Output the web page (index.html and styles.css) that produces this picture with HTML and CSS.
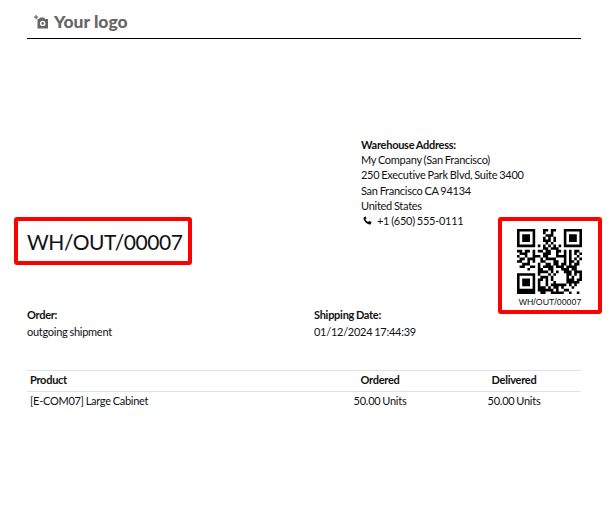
FILE: index.html
```html
<!DOCTYPE html>
<html lang="en">
<head>
<meta charset="utf-8">
<title>WH/OUT/00007</title>
<link rel="stylesheet" href="styles.css">
</head>
<body>
<div class="page">
  <header class="header">
    <svg class="logo-icon" width="14" height="14" viewBox="0 0 14 14"><path fill="#666" fill-rule="evenodd" d="M0 1.500h1.500V0h1.200v1.500h1.500v1.200H2.700v1.500H1.500V2.700H0zM3.500 4H5l1-1.500h4L11 4h3v9.500H3.500zM8.700 5.700a2.700 2.700 0 1 0 0 5.400 2.700 2.700 0 0 0 0-5.400zm0 1.400a1.300 1.300 0 1 1 0 2.600 1.300 1.300 0 0 1 0-2.600z"/></svg>
    <span class="logo-text">Your logo</span>
  </header>

  <section class="address">
    <div class="strong">Warehouse Address:</div>
    <div>My Company (San Francisco)</div>
    <div>250 Executive Park Blvd, Suite 3400</div>
    <div>San Francisco CA 94134</div>
    <div>United States</div>
    <div class="phone">
      <svg width="9" height="9" viewBox="0 0 24 24"><path fill="#111" d="M6.600 1.500 2.800 3C1.500 3.600 1 5 1.400 7c1.600 7.600 8 14 15.600 15.600 2 .4 3.400-.1 4-1.400l1.500-3.800c.2-.6 0-1.200-.5-1.500l-4.600-2.600c-.5-.3-1.100-.2-1.500.3l-1.900 2.300c-3.300-1.600-5.900-4.200-7.500-7.500l2.300-1.900c.5-.4.600-1 .3-1.500L8.100 2c-.3-.5-.9-.7-1.500-.5z"/></svg>
      <span>+1 (650) 555-0111</span>
    </div>
  </section>

  <section class="title-row">
    <h1 class="title">WH/OUT/00007</h1>
    <div class="qr-box">
      <svg class="qr" width="65" height="65" viewBox="0 0 25 25"><path stroke="#000" fill="none" d="M0 .5h7M10 .5h2M13 .5h2M18 .5h7M0 1.500h1M6 1.500h1M10 1.500h1M13 1.500h1M18 1.500h1M24 1.500h1M0 2.500h1M2 2.500h3M6 2.500h1M11 2.500h3M18 2.500h1M20 2.500h3M24 2.500h1M0 3.500h1M2 3.500h3M6 3.500h1M10 3.500h1M12 3.500h1M14 3.500h1M18 3.500h1M20 3.500h3M24 3.500h1M0 4.500h1M2 4.500h3M6 4.500h1M10 4.500h3M14 4.500h1M18 4.500h1M20 4.500h3M24 4.500h1M0 5.500h1M6 5.500h1M11 5.500h1M13 5.500h1M18 5.500h1M24 5.500h1M0 6.500h7M8 6.500h1M10 6.500h1M12 6.500h1M14 6.500h1M16 6.500h1M18 6.500h7M10 7.500h2M13 7.500h3M0 8.500h2M3 8.500h2M6 8.500h1M8 8.500h2M11 8.500h2M15 8.500h2M18 8.500h1M20 8.500h1M22 8.500h2M1 9.500h3M6 9.500h1M10 9.500h3M15 9.500h1M18 9.500h1M20 9.500h1M22 9.500h1M24 9.500h1M0 10.500h1M3 10.500h1M6 10.500h3M10 10.500h2M15 10.500h3M18 10.500h1M20 10.500h1M23 10.500h1M1 11.500h2M4 11.500h3M9 11.500h1M11 11.500h4M18 11.500h1M20 11.500h1M22 11.500h1M24 11.500h1M0 12.500h2M4 12.500h1M6 12.500h1M9 12.500h2M14 12.500h2M18 12.500h1M20 12.500h2M23 12.500h1M2 13.500h3M8 13.500h1M11 13.500h2M14 13.500h2M17 13.500h2M20 13.500h1M22 13.500h2M1 14.500h2M5 14.500h2M8 14.500h1M10 14.500h4M15 14.500h3M19 14.500h4M4 15.500h1M8 15.500h2M12 15.500h2M17 15.500h3M21 15.500h2M8 16.500h4M13 16.500h1M15 16.500h1M18 16.500h3M22 16.500h3M0 17.500h7M8 17.500h1M12 17.500h1M14 17.500h1M19 17.500h2M22 17.500h1M24 17.500h1M0 18.500h1M6 18.500h1M9 18.500h3M13 18.500h1M19 18.500h1M21 18.500h1M24 18.500h1M0 19.500h1M2 19.500h3M6 19.500h1M8 19.500h2M11 19.500h1M13 19.500h1M19 19.500h3M23 19.500h2M0 20.500h1M2 20.500h3M6 20.500h1M8 20.500h1M11 20.500h1M14 20.500h1M19 20.500h5M0 21.500h1M2 21.500h3M6 21.500h1M8 21.500h1M11 21.500h1M13 21.500h6M20 21.500h1M22 21.500h1M0 22.500h1M6 22.500h1M8 22.500h3M12 22.500h1M14 22.500h2M17 22.500h1M21 22.500h1M0 23.500h7M8 23.500h6M15 23.500h1M18 23.500h2M0 24.500h7M9 24.500h2M13 24.500h5M20 24.500h1M23 24.500h1"/></svg>
      <div class="qr-label">WH/OUT/00007</div>
    </div>
  </section>

  <section class="info">
    <div class="info-order">
      <div class="strong">Order:</div>
      <div>outgoing shipment</div>
    </div>
    <div class="info-date">
      <div class="strong">Shipping Date:</div>
      <div>01/12/2024 17:44:39</div>
    </div>
  </section>

  <table class="moves">
    <thead>
      <tr><th class="col-product">Product</th><th class="col-qty">Ordered</th><th class="col-qty">Delivered</th></tr>
    </thead>
    <tbody>
      <tr><td class="col-product">[E-COM07] Large Cabinet</td><td class="col-qty">50.00 Units</td><td class="col-qty">50.00 Units</td></tr>
    </tbody>
  </table>
</div>
</body>
</html>
```

FILE: styles.css
```css
* { box-sizing: border-box; }
html, body { margin: 0; padding: 0; background: #fff; }
body {
  font-family: Lato, "Liberation Sans", sans-serif;
  font-size: 11px;
  line-height: 15.2px;
  letter-spacing: -0.27px;
  word-spacing: -0.6px;
  color: #111;
}
.page { width: 609px; height: 521px; padding: 0 28px 0 27px; overflow: hidden; }
.header {
  height: 39px;
  border-bottom: 1px solid #000;
  display: flex;
  align-items: center;
  gap: 6px;
  padding: 6px 0 0 7px;
}
.logo-icon { display: block; margin-top: 0; }
.logo-text { font-size: 17.500px; font-weight: 900; letter-spacing: 0; word-spacing: 0; color: #666; line-height: 20px; }
.strong { font-weight: 700; }
.address { margin: 98px 0 0 334px; }
.phone { display: flex; align-items: center; gap: 5px; padding-left: 2px; }
.title-row {
  display: flex;
  justify-content: space-between;
  align-items: flex-start;
  margin: -11px -21px 0 -13px;
}
.title {
  margin: 0;
  width: 178px;
  height: 48px;
  border: 4px solid #f00;
  border-radius: 3px;
  padding: 1px 0 0 9px;
  font-size: 21px;
  font-weight: 400;
  letter-spacing: -0.45px;
  word-spacing: 0;
  line-height: 40px;
  color: #111;
  white-space: nowrap;
}
.qr-box {
  width: 104px;
  height: 97px;
  border: 4px solid #f00;
  border-radius: 3px;
  display: flex;
  flex-direction: column;
  align-items: center;
  padding-top: 8px;
}
.qr { display: block; flex: none; margin-right: 2px; }
.qr-label { font-family: "Liberation Sans", sans-serif; font-size: 8.800px; letter-spacing: 0; word-spacing: 0; line-height: 10px; margin-top: 3px; color: #111; }
.info { display: flex; margin-top: -7px; }
.info-order { width: 287px; }
.info-order div + div, .info-date div + div { margin-top: 2px; }
.moves { width: 100%; border-collapse: collapse; margin-top: 30px; border-top: 1px solid #dee2e6; table-layout: fixed; }
.moves th, .moves td { padding: 1px 3px 3px; height: 21px; }
.moves th { font-weight: 700; border-bottom: 1px solid #dee2e6; }
.col-product { text-align: left; width: 286px; }
.col-qty { text-align: center; }
```
